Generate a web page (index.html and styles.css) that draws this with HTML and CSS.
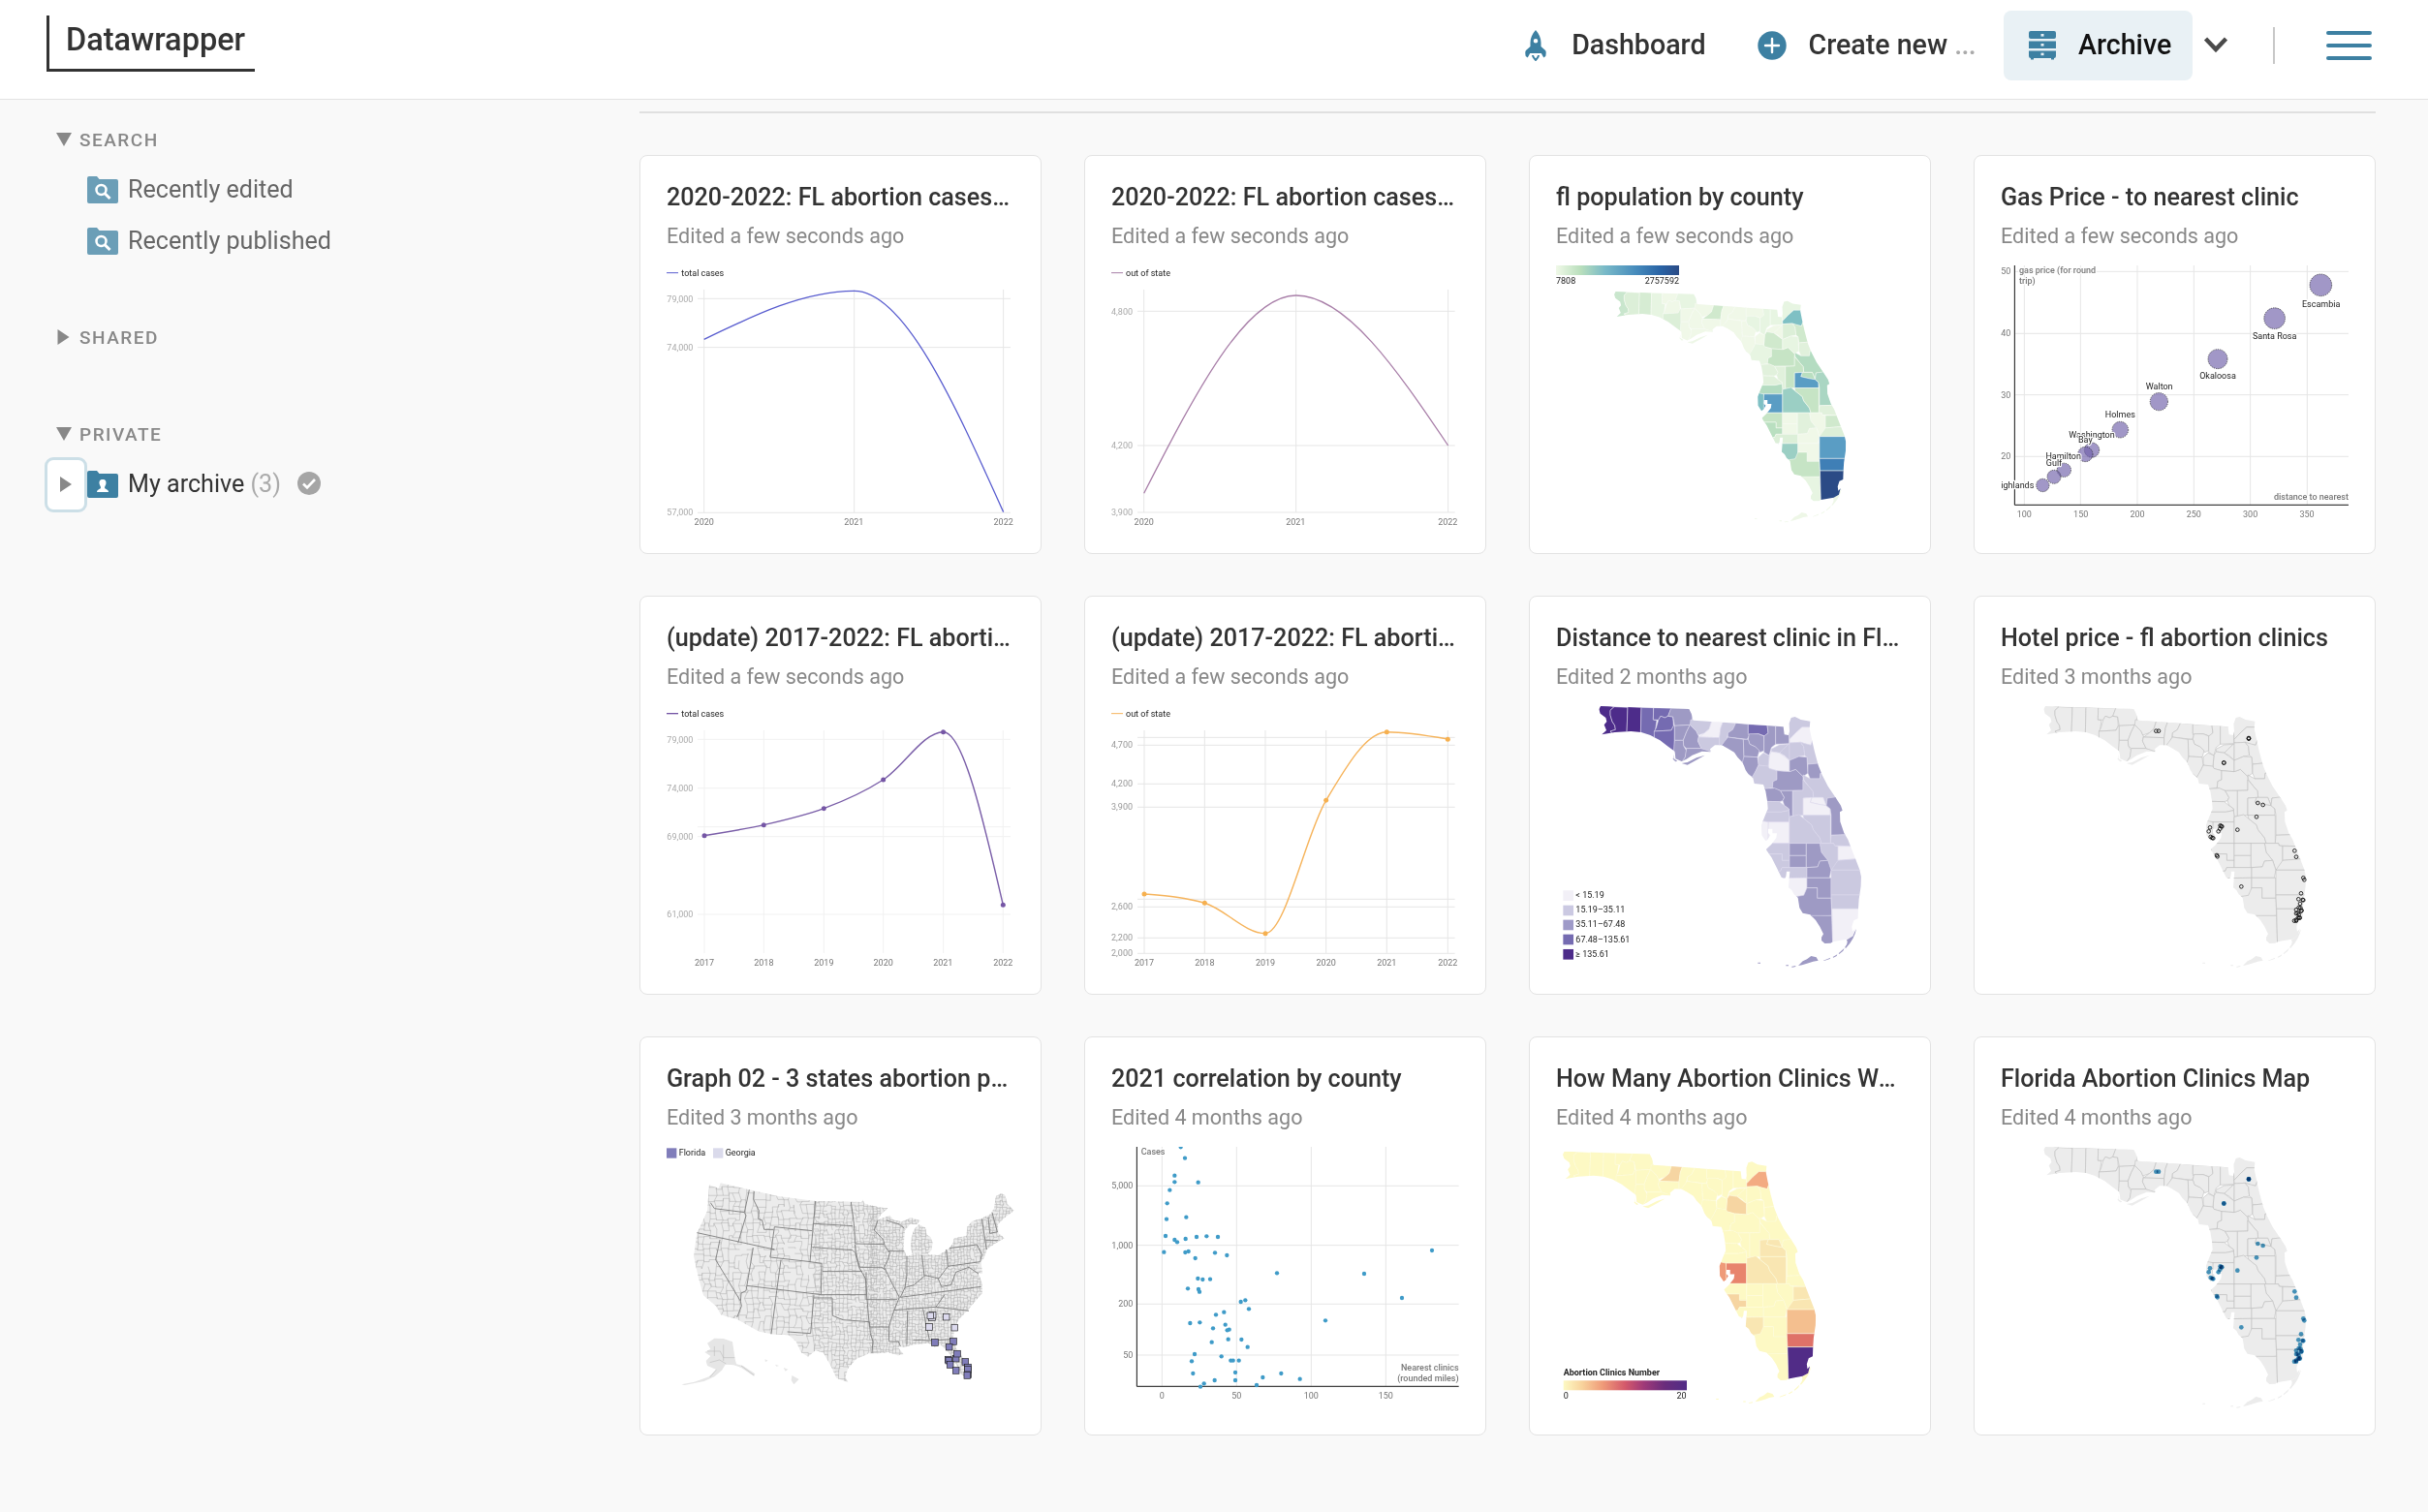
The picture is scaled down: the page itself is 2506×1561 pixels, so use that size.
FILE: index.html
```html
<!DOCTYPE html>
<html lang="en">
<head>
<meta charset="utf-8">
<title>Archive - Datawrapper</title>
<link rel="stylesheet" href="styles.css">
</head>
<body>
<header class="header">
  <a class="logo">Datawrapper</a>
  <nav class="nav">
    <a class="nav-item nav-dashboard">
      <svg class="icon-rocket" viewBox="0 0 22 32"><path fill="#3d80a2" fill-rule="evenodd" d="M11 0C14.500 4 16.500 8 16.500 13v4l4.500 4c1 1 .8 3 .3 6l-2 1.500-2.500-4.500H5.200L2.700 28.500.7 27C.2 24 0 22 1 21l4.500-4v-4C5.500 8 7.500 4 11 0zm0 9a2.300 2.300 0 1 0 0 4.600A2.300 2.300 0 0 0 11 9z"/><path fill="none" stroke="#3d80a2" stroke-width="2" d="M8 26c0 2 1.500 3 3 5 1.500-2 3-3 3-5"/></svg>
      <span>Dashboard</span>
    </a>
    <a class="nav-item nav-create">
      <svg class="icon-plus" viewBox="0 0 30 30"><circle cx="15" cy="15" r="14.700" fill="#3d80a2"/><path d="M15 8v14M8 15h14" stroke="#fff" stroke-width="2.400" stroke-linecap="round"/></svg>
      <span>Create new <i>...</i></span>
    </a>
    <a class="nav-item nav-archive">
      <svg class="icon-drawers" viewBox="0 0 28 30"><g fill="#3d80a2"><rect x="0" y="0" width="28" height="8" rx="2"/><rect x="0" y="10.500" width="28" height="7.500"/><path d="M0 20.500h28v5.500q0 2-2 2v1.500h-3v-1.500H5v1.500H2V28q-2 0-2-2z"/></g><g fill="#e9f1f5"><rect x="12.500" y="3" width="3" height="2.600"/><rect x="12.500" y="13" width="3" height="2.600"/><rect x="12.500" y="22.600" width="3" height="2.600"/></g></svg>
      <span>Archive</span>
    </a>
    <svg class="icon-chevron" viewBox="0 0 26 18"><path d="M2.500 3l10.500 11L23.500 3" fill="none" stroke="#4a4a4a" stroke-width="4.400"/></svg>
    <span class="divider"></span>
    <span class="burger"><b></b><b></b><b></b></span>
  </nav>
</header>

<div class="page">
  <aside class="sidebar">
    <h2 class="group group-search"><svg class="tri" viewBox="0 0 16 16"><path d="M0 1h16L8 15z"/></svg>Search</h2>
    <a class="folder"><svg class="icon-folder" viewBox="0 0 32 28"><path fill="#6b9eb7" d="M2 0h8l2.500 3H30q2 0 2 2v21q0 2-2 2H2q-2 0-2-2V2q0-2 2-2z"/><circle cx="14.500" cy="14" r="5" fill="none" stroke="#fff" stroke-width="2.500"/><path d="M18 17.500l5.500 5.500" stroke="#fff" stroke-width="3"/></svg>Recently edited</a>
    <a class="folder"><svg class="icon-folder" viewBox="0 0 32 28"><path fill="#6b9eb7" d="M2 0h8l2.500 3H30q2 0 2 2v21q0 2-2 2H2q-2 0-2-2V2q0-2 2-2z"/><circle cx="14.500" cy="14" r="5" fill="none" stroke="#fff" stroke-width="2.500"/><path d="M18 17.500l5.500 5.500" stroke="#fff" stroke-width="3"/></svg>Recently published</a>
    <h2 class="group group-shared"><svg class="tri" viewBox="0 0 16 16"><path d="M1.500 0v16L13.500 8z"/></svg>Shared</h2>
    <h2 class="group group-private"><svg class="tri" viewBox="0 0 16 16"><path d="M0 1h16L8 15z"/></svg>Private</h2>
    <div class="archive-row">
      <span class="expander"><svg viewBox="0 0 12 16"><path d="M0 0v16L12 8z"/></svg></span>
      <svg class="icon-folder" viewBox="0 0 32 28"><path fill="#3d80a2" d="M2 0h8l2.500 3H30q2 0 2 2v21q0 2-2 2H2q-2 0-2-2V2q0-2 2-2z"/><path fill="#fff" d="M16 9c3 0 3.800 2 3.400 4.500-.2 1.600-1.400 2.500-1.400 3.800 0 2 4 1.700 4 4.700H10c0-3 4-2.700 4-4.700 0-1.300-1.200-2.200-1.400-3.800C12.200 11 13 9 16 9z"/></svg>
      <span class="archive-name">My archive <em>(3)</em></span>
      <svg class="icon-check" viewBox="0 0 24 24"><circle cx="12" cy="12" r="12" fill="#a5a5a5"/><path d="M6 12.500l4 4 8-8.500" fill="none" stroke="#fff" stroke-width="2.600"/></svg>
    </div>
  </aside>

  <main class="content">
    <div class="cards">
      <article class="card">
        <h3>2020-2022: FL abortion cases by total</h3><p>Edited a few seconds ago</p>
        <svg class="chart" viewBox="114 372 1077 820">
          <path class="grid" d="M210 475H1179M210 626H1179M210 1138H1179M230 447V1137M695 447V1137M1157 447V1137"/>
          <path class="line" stroke="#585ccf" d="M230 601C385 526 540 451 695 451C849 451 1003 793 1157 1136"/>
          <path stroke="#585ccf" stroke-width="3" d="M114 395h36"/><text x="160" y="405">total cases</text>
          <g class="tick light"><text x="115" y="485">79,000</text><text x="115" y="635">74,000</text><text x="115" y="1146">57,000</text></g>
          <g class="tick mid"><text x="230" y="1175">2020</text><text x="694" y="1175">2021</text><text x="1157" y="1175">2022</text></g>
        </svg>
      </article>
      <article class="card">
        <h3>2020-2022: FL abortion cases out of state</h3><p>Edited a few seconds ago</p>
        <svg class="chart" viewBox="111 372 1077 820">
          <path class="grid" d="M192 514H1175M192 930H1175M192 1137H1175M212 447V1137M683 447V1137M1154 447V1137"/>
          <path class="line" stroke="#a87ea8" d="M212 1078C369 772 526 465 683 465C840 465 997 698 1154 930"/>
          <path stroke="#a87ea8" stroke-width="3" d="M111 395h36"/><text x="156" y="405">out of state</text>
          <g class="tick light"><text x="111" y="524">4,800</text><text x="111" y="939">4,200</text><text x="111" y="1146">3,900</text></g>
          <g class="tick mid"><text x="212" y="1175">2020</text><text x="682" y="1175">2021</text><text x="1153" y="1175">2022</text></g>
        </svg>
      </article>
      <article class="card">
        <h3>fl population by county</h3><p>Edited a few seconds ago</p>
        <svg class="chart" viewBox="108 372 1077 820">
          <defs><linearGradient id="pop"><stop offset="0" stop-color="#f0f9e8"/><stop offset=".2" stop-color="#b9dfbc"/><stop offset=".4" stop-color="#78b9c8"/><stop offset=".65" stop-color="#468bbc"/><stop offset=".85" stop-color="#2963a5"/><stop offset="1" stop-color="#2b4b86"/></linearGradient></defs>
          <rect x="108" y="372" width="381" height="30" fill="url(#pop)"/>
          <text x="108" y="429">7808</text><text x="489" y="429" text-anchor="end">2757592</text>
          <g class="florida" data-map="population" transform="translate(75 124.200) scale(.884)"></g>
        </svg>
      </article>
      <article class="card">
        <h3>Gas Price - to nearest clinic</h3><p>Edited a few seconds ago</p>
        <svg class="chart" viewBox="105 372 1077 820">
          <path class="grid" d="M150 391H1182M150 583H1182M150 773H1182M150 964H1182M178 372V1113M352 372V1113M528 372V1113M703 372V1113M878 372V1113M1054 372V1113"/>
          <path class="axis" d="M148 372V1114H1182"/>
          <g class="bubbles"><circle cx="1096" cy="433" r="34"/><circle cx="953" cy="536" r="32.500"/><circle cx="777" cy="662" r="30"/><circle cx="595" cy="794" r="27.500"/><circle cx="475" cy="881" r="25"/><circle cx="387" cy="944" r="23"/><circle cx="367" cy="957" r="23"/><circle cx="301" cy="1006" r="21.500"/><circle cx="270" cy="1027" r="21"/><circle cx="235" cy="1053" r="20"/></g>
          <g class="tick mid"><text x="121" y="400">50</text><text x="121" y="591">40</text><text x="121" y="782">30</text><text x="121" y="973">20</text><text x="178" y="1153">100</text><text x="353" y="1153">150</text><text x="528" y="1153">200</text><text x="703" y="1153">250</text><text x="878" y="1153">300</text><text x="1053" y="1153">350</text></g>
          <g class="halo mid-anchor"><text x="1097" y="500">Escambia</text><text x="953" y="600">Santa Rosa</text><text x="777" y="723">Okaloosa</text><text x="596" y="755">Walton</text><text x="475" y="842">Holmes</text><text x="387" y="906">Washington</text><text x="367" y="921">Bay</text><text x="299" y="971">Hamilton</text><text x="270" y="993">Gulf</text><text x="157" y="1062">ighlands</text></g>
          <g class="halo axis-title"><text x="162" y="396">gas price (for round</text><text x="162" y="428">trip)</text><text x="1182" y="1097" text-anchor="end">distance to nearest</text></g>
        </svg>
      </article>

      <article class="card">
        <h3>(update) 2017-2022: FL abortion cases</h3><p>Edited a few seconds ago</p>
        <svg class="chart" viewBox="114 372 1077 820">
          <path class="grid faint" d="M210 475H1179M210 626H1179M210 746H1179M210 776H1179M210 1017H1179M231 447V1137M415 447V1137M601 447V1137M785 447V1137M971 447V1137M1156 447V1137"/>
          <path class="line thick" stroke="#7a5ea8" d="M231 773C292 763 353 754 415 740C477 726 539 712 601 689C663 666 724 639 785 600C847 560 909 452 971 452C1032 452 1094 720 1156 988"/>
          <g fill="#7556a5"><circle cx="231" cy="773" r="7.500"/><circle cx="415" cy="740" r="7.500"/><circle cx="601" cy="689" r="7.500"/><circle cx="785" cy="600" r="7.500"/><circle cx="971" cy="452" r="7.500"/><circle cx="1156" cy="988" r="7.500"/></g>
          <path stroke="#7556a5" stroke-width="4" d="M114 395h36"/><text x="160" y="405">total cases</text>
          <g class="tick light"><text x="115" y="485">79,000</text><text x="115" y="635">74,000</text><text x="115" y="786">69,000</text><text x="115" y="1026">61,000</text></g>
          <g class="tick mid"><text x="231" y="1175">2017</text><text x="415" y="1175">2018</text><text x="601" y="1175">2019</text><text x="785" y="1175">2020</text><text x="970" y="1175">2021</text><text x="1156" y="1175">2022</text></g>
        </svg>
      </article>
      <article class="card">
        <h3>(update) 2017-2022: FL abortion cases</h3><p>Edited a few seconds ago</p>
        <svg class="chart" viewBox="111 372 1077 820">
          <path class="grid" d="M192 469H1175M192 493H1175M192 613H1175M192 685H1175M192 970H1175M192 994H1175M192 1090H1175M192 1138H1175M213 447V1137M400 447V1137M588 447V1137M776 447V1137M964 447V1137M1153 447V1137"/>
          <path class="line thick" stroke="#f6b45c" d="M213 954C275 959 338 963 400 982C463 1001 525 1076 588 1076C650 1076 713 768 776 664C838 560 901 452 964 452C1027 452 1090 463 1153 474"/>
          <g fill="#f6b04f"><circle cx="213" cy="954" r="7.500"/><circle cx="400" cy="982" r="7.500"/><circle cx="588" cy="1076" r="7.500"/><circle cx="776" cy="664" r="7.500"/><circle cx="964" cy="452" r="7.500"/><circle cx="1153" cy="475" r="7.500"/></g>
          <path stroke="#f6b45c" stroke-width="3" d="M111 395h36"/><text x="156" y="405">out of state</text>
          <g class="tick light dark"><text x="111" y="502">4,700</text><text x="111" y="622">4,200</text><text x="111" y="694">3,900</text><text x="111" y="1003">2,600</text><text x="111" y="1099">2,200</text><text x="111" y="1146">2,000</text></g>
          <g class="tick mid"><text x="213" y="1175">2017</text><text x="400" y="1175">2018</text><text x="588" y="1175">2019</text><text x="776" y="1175">2020</text><text x="964" y="1175">2021</text><text x="1153" y="1175">2022</text></g>
        </svg>
      </article>
      <article class="card">
        <h3>Distance to nearest clinic in Florida by county</h3><p>Edited 2 months ago</p>
        <svg class="chart" viewBox="108 372 1077 820">
          <g class="florida" data-map="distance"></g>
          <rect x="130" y="943" width="32" height="32" fill="#f2f0f7"/><rect x="130" y="989" width="32" height="32" fill="#cbc9e2"/><rect x="130" y="1034" width="32" height="32" fill="#9e9ac8"/><rect x="130" y="1079" width="32" height="32" fill="#756bb1"/><rect x="130" y="1125" width="32" height="32" fill="#4d2c8a"/>
          <text x="169" y="967">&lt; 15.19</text><text x="169" y="1012">15.19–35.11</text><text x="169" y="1057">35.11–67.48</text><text x="169" y="1104">67.48–135.61</text><text x="169" y="1149">≥ 135.61</text>
        </svg>
      </article>
      <article class="card">
        <h3>Hotel price - fl abortion clinics</h3><p>Edited 3 months ago</p>
        <svg class="chart" viewBox="105 372 1077 820">
          <g class="florida" data-map="plain" transform="translate(-3 0)"></g>
          <g class="clinics rings"></g>
        </svg>
      </article>

      <article class="card">
        <h3>Graph 02 - 3 states abortion providers</h3><p>Edited 3 months ago</p>
        <svg class="chart" viewBox="114 372 1077 820">
          <rect x="114" y="376" width="31" height="31" fill="#807dba"/><text x="152" y="400">Florida</text>
          <rect x="258" y="376" width="31" height="31" fill="#dadaeb"/><text x="296" y="400">Georgia</text>
          <g class="usa"></g>
        </svg>
      </article>
      <article class="card">
        <h3>2021 correlation by county</h3><p>Edited 4 months ago</p>
        <svg class="chart" viewBox="111 372 1077 820">
          <path class="grid" d="M191 493H1187M191 677H1187M191 859H1187M191 1017H1187M268 372V1113M499 372V1113M730 372V1113M961 372V1113"/>
          <path class="axis" d="M190 372V1114H1187"/>
          <g class="scatter" fill="#3f9bc8"></g>
          <g class="tick end"><text x="178" y="502">5,000</text><text x="178" y="686">1,000</text><text x="178" y="868">200</text><text x="178" y="1026">50</text></g>
          <g class="tick mid"><text x="268" y="1153">0</text><text x="499" y="1153">50</text><text x="730" y="1153">100</text><text x="961" y="1153">150</text></g>
          <g class="halo axis-title"><text x="203" y="396">Cases</text><text x="1187" y="1065" text-anchor="end">Nearest clinics</text><text x="1187" y="1097" text-anchor="end">(rounded miles)</text></g>
        </svg>
      </article>
      <article class="card">
        <h3>How Many Abortion Clinics Were There</h3><p>Edited 4 months ago</p>
        <svg class="chart" viewBox="108 372 1077 820">
          <defs><linearGradient id="heat"><stop offset="0" stop-color="#fdf9c4"/><stop offset=".15" stop-color="#f8d39c"/><stop offset=".32" stop-color="#ef9a78"/><stop offset=".5" stop-color="#d4596b"/><stop offset=".65" stop-color="#a03a78"/><stop offset=".82" stop-color="#6a2c7c"/><stop offset="1" stop-color="#512c87"/></linearGradient></defs>
          <g class="florida" data-map="count" transform="translate(-103.600 27) scale(.965)"></g>
          <text class="strong" x="131" y="1081">Abortion Clinics Number</text>
          <rect x="131" y="1096" width="382" height="30" fill="url(#heat)"/>
          <text x="131" y="1152">0</text><text x="512" y="1152" text-anchor="end">20</text>
        </svg>
      </article>
      <article class="card">
        <h3>Florida Abortion Clinics Map</h3><p>Edited 4 months ago</p>
        <svg class="chart" viewBox="105 372 1077 820">
          <g class="florida" data-map="plain" transform="translate(-3 0)"></g>
          <g class="clinics dots"></g>
        </svg>
      </article>
    </div>
  </main>
</div>
<script src="maps.js"></script>
</body>
</html>
```
FILE: styles.css
```css
* { box-sizing: border-box; }
body { margin: 0; min-height: 1561px; background: #f9f9f9; font-family: Roboto, "Liberation Sans", sans-serif; color: #333; }

.header { display: flex; justify-content: space-between; align-items: flex-start; height: 103px; padding: 11px 58px 0 48px; background: #fff; border-bottom: 1px solid #e2e2e2; }
.logo { width: 215px; height: 58px; margin-top: 5px; padding-left: 17px; border-left: 3px solid #333; border-bottom: 3px solid #333; font-size: 32.500px; line-height: 50px; font-weight: 500; letter-spacing: 0; }
.nav { display: flex; align-items: center; height: 72px; font-size: 28.600px; font-weight: 500; }
.nav-item { display: flex; align-items: center; height: 72px; }
.nav-item span { padding-bottom: 2px; }
.nav-item i { font-style: normal; color: #aaa; letter-spacing: -.7px; }
.nav-dashboard { gap: 26px; margin-right: 53px; }
.nav-create { gap: 23px; margin-right: 29px; }
.nav-archive { width: 195px; gap: 23px; padding-left: 26px; background: #e9f1f5; border-radius: 8px; color: #111; }
.icon-rocket { width: 22px; height: 32px; }
.icon-plus { width: 30px; height: 30px; }
.icon-drawers { width: 28px; height: 30px; }
.icon-chevron { width: 26px; height: 18px; margin-left: 11px; margin-bottom: 3px; }
.divider { width: 2px; height: 38px; margin-left: 46px; background: #c8c8c8; }
.burger { display: flex; flex-direction: column; gap: 9px; width: 47px; margin-left: 53px; }
.burger b { height: 4px; border-radius: 2px; background: #3d80a2; }

.page { display: flex; }
.sidebar { width: 660px; padding: 24px 0 0 46px; }
.group { display: flex; align-items: center; gap: 8px; height: 34px; margin: 0; padding-left: 12px; font-size: 19px; font-weight: 500; letter-spacing: 1.500px; text-transform: uppercase; color: #888; }
.tri { width: 16px; height: 16px; fill: #888; }
.folder { display: flex; align-items: center; gap: 10px; height: 53px; padding-left: 44px; font-size: 25.100px; color: #666; }
.group-search + .folder { margin-top: 8px; }
.icon-folder { width: 32px; height: 28px; }
.group-shared { margin-top: 56px; }
.group-private { margin-top: 66px; }
.archive-row { display: flex; align-items: center; height: 57px; margin-top: 7px; font-size: 25.100px; }
.expander { display: flex; align-items: center; justify-content: center; width: 44px; height: 57px; border: 3px solid #ccdfe7; border-radius: 9px; background: #fff; }
.expander svg { width: 12px; height: 16px; fill: #888; margin-right: 1px; margin-bottom: 2px; }
.archive-row .icon-folder { margin-bottom: 2px; }
.archive-name { margin-left: 10px; padding-bottom: 2px; }
.archive-name em { font-style: normal; color: #aaa; }
.icon-check { width: 24px; height: 24px; margin-left: 17px; margin-bottom: 3px; }

.content { width: 1792px; padding-top: 12px; }
.cards { display: grid; grid-template-columns: repeat(4, 415px); grid-auto-rows: 412px; gap: 43px 44px; padding-top: 43px; border-top: 2px solid #e0e0e0; }
.card { padding: 26px 27px 0; background: #fff; border: 1px solid #e3e3e3; border-radius: 8px; }
.card h3 { margin: 0; width: 356px; height: 34px; line-height: 34px; overflow: hidden; white-space: nowrap; text-overflow: ellipsis; font-size: 25.150px; font-weight: 500; }
.card p { margin: 6px 0 0; height: 34px; line-height: 34px; font-size: 21.550px; color: #888; }
.chart { display: block; width: 359px; height: 273.300px; margin-top: 13px; font-size: 27px; fill: #222; }
.grid { stroke: #e6e6e6; stroke-width: 3; fill: none; }
.grid.faint { stroke: #f1f1f1; }
.axis { stroke: #111; stroke-width: 3; fill: none; }
.line { fill: none; stroke-width: 3.800; }
.line.thick { stroke-width: 4.300; }
.tick { fill: #777; }
.tick.light { fill: #aaa; }
.tick.dark { fill: #999; }
.mid, .mid-anchor { text-anchor: middle; }
.tick.end { text-anchor: end; }
.bubbles { fill: #7161aa; fill-opacity: .66; stroke: #222; stroke-width: 2; stroke-dasharray: 4 3; }
.halo { paint-order: stroke; stroke: #fff; stroke-width: 7; stroke-linejoin: round; }
.axis-title { fill: #777; font-weight: 500; }
.strong { font-weight: 700; }
.rings { fill: none; stroke: #111; stroke-width: 2.600; }
.dots circle { fill: #4a9cc5; mix-blend-mode: multiply; }
```
FILE: maps.js
```js
// Florida: coast outline and county areas; counties are clipped to the coast.
const coast = 'M246 372L520 381L527 395L533 416L812 436L815 460L828 462L831 450L830 425L836 408L848 405L866 414L895 419L893 440L899 470L908 510L920 555L932 585L950 620L975 657L990 680L995 695L987 700L988 730L1000 765L1012 785L1020 806L1036 847L1048 878L1053 900L1052 930L1046 970L1044 1000L1043 1030L1030 1036L1024 1055L1026 1070L1034 1062L1028 1084L1010 1094L985 1098L965 1102L958 1106L940 1107L930 1098L930 1088L936 1078L925 1055L912 1035L895 1018L872 1013L862 997L857 965L845 955L838 942L828 934L830 908L832 884L822 884L820 900L816 906L806 902L795 880L775 840L758 816L775 800L790 780L792 766L778 766L778 752L765 752L764 764L772 772L764 784L757 790L745 772L744 740L748 730L755 712L764 690L762 665L757 635L750 615L722 612L718 595L705 585L695 570L687 548L670 530L660 515L640 503L622 493L600 493L585 505L586 514L560 512L530 524L512 536L497 543L478 535L476 512L455 497L430 478L400 462L372 453L340 450L290 453L250 460L264 447L257 430L265 420L262 408L245 395L241 382Z';
const keys = 'M858 1176L872 1162L885 1156L898 1146L914 1150L920 1160L904 1163L890 1168L870 1174ZM820 1174h8v3h-8ZM836 1179l14-3v3l-10 2ZM733 1166h8v3h-8ZM936 1160l22-9-2 4-18 6ZM965 1149l14-8-2 5-10 5ZM983 1138l18-17-4 9-12 10ZM1002 1120Q1014 1106 1008 1096L1026 1084L1038 1062Q1032 1094 1006 1121ZM474 520l-2 14 12 8-6 2-8-8zM497 549l18-3 28-14 26-8-24 14-30 16z';
const counties = {
  escambia: '241,365 288,374 276,385 276,400 282,420 290,432 292,445 276,450 285,462 245,465 235,380',
  santarosa: '288,374 330,376 327,456 285,458 276,450 292,445 290,432 282,420 276,400 276,385',
  okaloosa: '330,374 372,376 370,458 327,457',
  walton: '372,376 410,377 409,414 420,416 415,450 412,472 370,458',
  holmes: '410,377 465,378 455,403 445,408 432,403 425,415 409,414',
  washington: '425,415 432,403 445,408 455,403 470,405 472,433 465,447 412,450 418,440',
  bay: '412,450 465,447 472,433 475,433 475,518 412,475',
  jackson: '465,376 530,379 530,418 525,430 475,433 470,405 455,403',
  calhoun: '475,433 523,430 512,452 502,478 475,478',
  liberty: '523,430 543,450 550,465 547,480 558,503 512,503 503,495 502,478 512,452',
  gulf: '475,478 502,478 503,495 512,510 508,530 495,555 470,540',
  franklin: '512,503 558,503 592,508 587,522 510,560 495,548 508,530',
  gadsden: '525,414 590,418 582,443 568,455 548,462 543,450 523,430',
  leon: '590,418 625,421 618,440 614,470 550,468 568,455 582,443',
  wakulla: '550,468 614,470 614,500 585,512 558,503 547,480',
  jefferson: '625,421 665,424 655,445 640,455 638,470 625,497 614,500 614,470 618,440',
  madison: '665,424 703,428 703,455 708,460 700,475 640,468 640,455 655,445',
  taylor: '640,468 688,475 690,527 690,555 660,525 618,497',
  hamilton: '703,428 762,431 765,455 755,465 735,458 703,460',
  suwannee: '706,458 735,458 752,465 752,510 740,515 725,498 708,490 703,475',
  lafayette: '688,475 703,475 708,490 725,498 738,510 732,530 690,528',
  columbia: '762,431 788,433 788,490 775,500 768,525 752,515 752,465 765,455',
  baker: '788,433 820,435 830,460 830,488 788,490',
  nassau: '826,400 900,400 897,438 870,437 850,455 831,475',
  duval: '831,475 850,455 870,437 905,437 905,470 897,493 880,490 865,484 831,486',
  union: '775,505 800,492 828,490 810,510 800,517 775,513',
  bradford: '800,517 828,490 832,490 831,540 815,525',
  clay: '831,486 865,484 875,497 878,525 860,528 831,540',
  stjohns: '865,484 897,493 905,475 930,548 888,552 885,530 878,525 875,497',
  alachua: '768,525 775,513 800,517 831,540 831,575 792,572 765,565',
  gilchrist: '735,530 750,517 768,525 765,560 735,555',
  dixie: '690,528 732,530 735,555 728,570 718,594 680,565',
  levy: '735,555 765,558 768,565 792,572 792,600 780,605 778,625 750,630 715,615 715,592 728,570',
  marion: '792,572 831,575 850,568 873,590 873,633 803,634 778,625 780,605 792,600',
  putnam: '831,540 860,528 885,530 888,580 873,590 850,568 831,575',
  flagler: '888,552 930,548 940,575 927,580 925,597 895,597 888,580',
  volusia: '873,585 895,597 925,597 927,580 945,580 990,657 948,657 945,680 935,655 905,655 903,635 890,620 875,600',
  citrus: '750,628 785,626 803,634 815,655 810,665 800,668 755,667',
  sumter: '803,634 841,634 841,712 831,715 829,690 815,680 810,665 815,655',
  hernando: '755,667 800,668 815,680 829,690 829,695 805,700 755,700',
  pasco: '750,700 805,700 829,695 831,715 829,731 740,731',
  lake: '841,634 873,633 873,600 890,620 903,635 905,655 873,657 873,710 841,712',
  seminole: '900,655 935,655 945,680 925,677 895,670',
  orange: '873,657 900,655 895,670 925,677 945,680 957,690 957,710 873,710',
  brevard: '948,657 1000,650 1012,770 960,772 960,710 957,690 945,680',
  hillsborough: '765,731 831,731 831,797 758,797',
  pinellas: '735,725 765,731 765,797 735,795',
  polk: '831,715 860,708 875,720 900,740 905,755 925,780 930,797 831,797',
  osceola: '873,710 958,710 958,797 930,797 925,780 905,755 900,740 875,720',
  indianriver: '960,772 1012,770 1024,806 970,804 968,797 958,797',
  okeechobee: '925,797 968,797 970,804 981,806 981,860 960,880 950,850 930,825',
  stlucie: '981,806 1025,806 1042,845 981,850',
  martin: '981,850 1042,845 1056,880 960,880',
  manatee: '755,797 831,797 831,850 808,850 808,830 762,830',
  sarasota: '762,830 808,830 808,850 831,850 831,872 808,872 803,883 780,885',
  hardee: '831,797 883,797 883,835 831,835',
  desoto: '831,835 883,835 883,872 831,872',
  highlands: '883,797 925,797 930,825 950,850 925,852 918,870 883,872',
  charlotte: '790,883 803,883 808,872 885,872 885,904 800,905',
  glades: '885,872 918,870 925,852 950,850 960,880 955,904 885,904',
  lee: '800,905 885,904 885,945 875,960 850,965 800,935',
  hendry: '885,904 960,904 960,967 917,967 917,935 885,935',
  collier: '885,935 917,935 917,967 960,967 962,1021 890,1025 850,1025 850,962 875,958',
  monroe: '862,1021 962,1021 965,1112 900,1112',
  palmbeach: '960,880 1060,880 1058,957 960,957',
  broward: '960,957 1058,957 1050,1000 962,1000',
  dade: '962,1000 1055,1000 1050,1112 965,1112'
};
const byColor = (base, groups) => {
  const fills = {};
  for (const name in counties) fills[name] = base;
  for (const color in groups) groups[color].split(' ').forEach(n => { fills[n] = color; });
  return fills;
};
const maps = {
  population: { stroke: '#f7fcf3', land: '#eef7e7', fills: byColor('#f0f8e8', {
    '#c9e6cd': 'escambia', '#dcefd8': 'santarosa bay charlotte clay martin', '#d6ecd3': 'okaloosa', '#e7f5e2': 'walton nassau putnam jackson levy monroe columbia suwannee baker',
    '#d0e9cd': 'leon alachua stlucie stjohns', '#7fc0c4': 'duval pinellas', '#c6e4c5': 'marion lake osceola manatee collier',
    '#b9dfc0': 'seminole sarasota', '#b4dcc1': 'volusia pasco', '#5a9dc4': 'orange hillsborough palmbeach', '#e1f1dc': 'citrus hernando sumter flagler indianriver highlands',
    '#aad6c3': 'brevard', '#9bcfc4': 'polk lee', '#3f7fb6': 'broward', '#2b4b86': 'dade' }) },
  distance: { stroke: '#dcd9ec', land: '#9e9ac4', fills: byColor('#9e9ac4', {
    '#4d2c8a': 'escambia santarosa okaloosa', '#756bb1': 'walton holmes washington bay hamilton',
    '#f2f0f7': 'leon duval alachua seminole orange hillsborough pinellas stlucie lee dade',
    '#cbc9e0': 'gadsden wakulla jefferson nassau union bradford clay stjohns gilchrist levy volusia hernando pasco lake polk osceola indianriver okeechobee martin manatee sarasota charlotte palmbeach broward' }) },
  count: { stroke: '#fdfbdc', land: '#fdf9c4', fills: byColor('#fdf9c4', {
    '#f6d5a2': 'leon alachua sarasota', '#f3ab82': 'duval', '#f9e6b2': 'orange seminole polk osceola lee stlucie martin',
    '#ef9a78': 'pinellas', '#e8846d': 'hillsborough', '#f4bf8f': 'palmbeach', '#df7268': 'broward', '#512c87': 'dade' }) },
  plain: { stroke: '#bdbdbd', land: '#ececec', fills: byColor('#ececec', {}) }
};
document.querySelectorAll('.florida').forEach((g, i) => {
  const m = maps[g.dataset.map];
  let s = `<clipPath id="coast${i}"><path d="${coast}"/></clipPath><path d="${keys}" fill="${m.land}"/><g clip-path="url(#coast${i})" stroke="${m.stroke}" stroke-width="1.800">`;
  for (const name in counties) s += `<polygon points="${counties[name]}" fill="${m.fills[name]}"/>`;
  g.innerHTML = s + '</g>';
});

// Clinic locations
const clinics = [[586,449],[594,449],[873,471],[873,472],[873,473],[796,547],[796,548],[901,672],[917,678],[897,715],[838,755],[753,748],[749,760],[785,742],[788,744],[790,745],[784,752],[779,760],[755,777],[760,780],[763,781],[774,834],[776,838],[850,931],[1015,820],[1020,839],[1042,904],[1045,910],[1035,952],[1027,970],[1040,972],[1042,973],[1032,984],[1028,996],[1033,997],[1020,1003],[1037,1005],[1035,1007],[1025,1013],[1020,1014],[1028,1018],[1030,1027],[1026,1028],[1031,1028],[1020,1034],[1014,1037],[1020,1037]];
document.querySelector('.rings').innerHTML = clinics.map(p => `<circle cx="${p[0]}" cy="${p[1]}" r="5.500"/>`).join('');
document.querySelector('.dots').innerHTML = clinics.map(p => `<circle cx="${p[0]}" cy="${p[1]}" r="7"/>`).join('');

// Cases against distance
const cases = [[326,373],[339,407],[307,461],[307,481],[380,482],[292,506],[284,547],[282,596],[343,590],[279,648],[307,660],[315,667],[341,657],[375,651],[406,649],[441,651],[274,698],[340,699],[350,696],[371,717],[432,700],[469,708],[1104,693],[624,763],[894,765],[379,780],[394,783],[417,782],[348,811],[381,813],[384,821],[512,852],[526,847],[1011,840],[537,874],[460,884],[435,892],[355,918],[385,916],[464,923],[774,910],[426,934],[470,940],[476,938],[473,968],[514,969],[422,977],[533,992],[369,1014],[452,1021],[360,1036],[481,1034],[488,1034],[506,1034],[364,1074],[495,1071],[637,1074],[580,1086],[695,1091],[431,1095],[495,1095],[398,1105],[387,1115],[561,1110]];
document.querySelector('.scatter').innerHTML = cases.map(p => `<circle cx="${p[0]}" cy="${p[1]}" r="6.500"/>`).join('');

// United States: county mesh, state borders, provider markers
const us = 'M246 490L275 500L281 484L370 505L460 525L575 540L718 543L722 535L726 547L740 552L778 560L800 562L780 578L768 598L790 590L806 584L815 598L842 604L870 592L900 600L888 612L868 612L852 630L850 650L848 690L858 712L875 705L870 680L872 655L880 628L895 612L915 622L920 645L932 652L938 670L934 692L922 704L955 708L985 690L1000 672L1005 655L1042 648L1045 620L1060 602L1088 594L1118 580L1128 562L1134 525L1150 516L1162 522L1170 550L1190 570L1160 592L1140 612L1142 640L1160 655L1130 672L1105 690L1098 715L1088 728L1092 765L1078 762L1090 790L1092 825L1070 850L1045 880L1020 905L1004 935L1002 965L1012 1000L1035 1030L1052 1055L1056 1080L1045 1090L1025 1075L1010 1045L985 1005L962 985L945 992L925 980L880 985L850 992L830 992L848 1015L830 1018L800 1008L770 1012L740 1012L700 1030L675 1060L668 1085L676 1102L640 1088L625 1055L600 1010L575 1002L552 1022L530 1008L515 975L492 955L440 952L400 944L330 905L282 892L268 866L228 832L212 775L198 710L208 640L240 570Z';
const states = 'M250 545L262 563L355 575M370 505L355 575L360 585L335 670M208 638L448 690L436 688M385 510L383 535L400 570L398 595L410 600L416 628L445 628M448 620L565 632M448 620L435 714L560 728M575 540L558 728M570 610L690 617M685 543L694 610L698 672L788 674M565 683L690 692L698 700L710 745M558 728L594 733L592 828M597 758H720M697 674L700 700L712 745H780L790 752M279 660L266 722L343 850L346 865L332 900M382 685L360 818L345 825L343 850M362 802L594 830H732M468 722L455 818L438 952M570 830L560 950L488 945M570 840H627L628 895L660 908L742 914M732 760V845H828M710 745L730 780L735 845L742 930H800M742 914L745 950L753 975L750 1010M768 600L757 630L785 660L790 680L805 700L800 720L788 745L800 770L815 800L835 838L818 880L802 930L803 975H832L838 990M795 600L835 612L850 625M800 695H850M858 710V770L852 808L838 838M852 808L880 800L915 770L957 780L985 742L980 690M905 708L912 772M838 838L1088 805M818 878L948 868L1050 880M860 880L858 985M908 874L928 970M878 970L928 972L1000 968M948 868L975 830M955 780L965 805L995 800L1010 760L1050 745L1080 765M985 742L1085 728L1090 705L1075 675L990 686M1090 595L1105 690M1110 590L1115 640L1140 635M1122 575L1138 635M1103 662H1140';
let seed = 7;
const rnd = () => (seed = (seed * 16807) % 2147483647) / 2147483647;
const mesh = (x0, x1, step, skip) => {
  const cols = Math.ceil((x1 - x0) / step) + 1, rows = Math.ceil(630 / step), pts = [];
  for (let r = 0; r <= rows; r++) for (let c = 0; c <= cols; c++)
    pts.push([(x0 + (c + (rnd() - .5) * .6) * step).toFixed(1), (480 + (r + (rnd() - .5) * .6) * step).toFixed(1)]);
  let d = '';
  for (let r = 0; r < rows; r++) for (let c = 0; c < cols; c++) {
    const a = pts[r * (cols + 1) + c], b = pts[r * (cols + 1) + c + 1], e = pts[(r + 1) * (cols + 1) + c];
    if (rnd() > skip) d += `M${a}H${b[0]}V${b[1]}`;
    if (rnd() > skip) d += `M${a}L${e}`;
  }
  return d;
};
const marks = (list, fill) => list.map(p => `<rect x="${p[0] - 10}" y="${p[1] - 10}" width="20" height="20" fill="${fill}" stroke="#222" stroke-width="2"/>`).join('');
document.querySelector('.usa').innerHTML =
  `<clipPath id="us"><path d="${us}"/></clipPath><path d="${us}" fill="#ececec"/>
  <g clip-path="url(#us)" fill="none" stroke="#b0b0b0" stroke-width="1.600"><path d="${mesh(190, 570, 19, .22)}"/><path d="${mesh(575, 740, 12.500, .15)}"/><path d="${mesh(745, 1200, 10, .12)}"/></g>
  <path d="${states}" fill="none" stroke="#808080" stroke-width="2.800" stroke-linejoin="round"/>
  <path fill="#e6e6e6" d="M240 980L262 965L290 966L318 976L326 1030L330 1045L350 1050L388 1075L384 1082L345 1056L322 1048L296 1046L285 1064L262 1084L230 1098L170 1110L160 1108L200 1100L245 1084L268 1062L240 1050L236 1035L250 1020L232 1008L250 998ZM502 1080L524 1092L508 1108L500 1095ZM418 1030l10 4-8 4zM450 1046l12 4-8 2zM476 1056l14 5-8 6z"/>
  <path fill="none" stroke="#b5b5b5" stroke-width="1.500" d="M240 1005h40l10 20h35M262 990v30M290 985v50M248 1040l30-8 20 12M345 1050l40 30M268 1062l-20 24"/>`
  + marks([[936,900],[938,893],[931,895],[980,899],[927,930],[1006,932]], '#dcdaee')
  + marks([[945,978],[1002,975],[989,992],[986,1031],[988,1034],[1010,1028],[1014,1013],[992,1047],[1039,1038],[1047,1055],[1047,1062],[1047,1078],[1045,1080],[1010,1065]], '#807dba');
```
